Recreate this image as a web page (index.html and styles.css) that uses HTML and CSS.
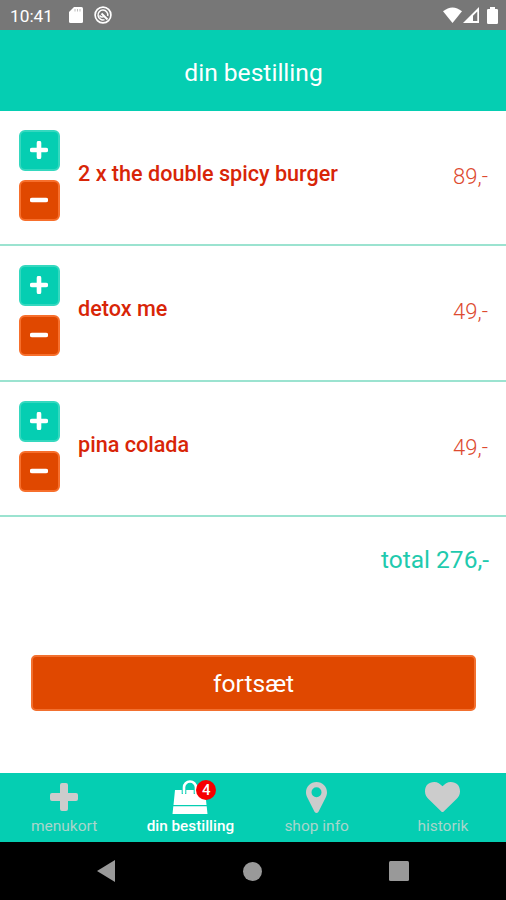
FILE: index.html
```html
<!DOCTYPE html>
<html lang="da">

<head>
    <meta charset="utf-8">
    <title>din bestilling</title>
    <link rel="stylesheet" href="styles.css">
</head>

<body>
    <div class="status-bar">
        <span class="clock">10:41</span>
        <svg class="icon-sd" width="14" height="16" viewBox="0 0 14 16">
            <path fill="#fff" d="M5 0h7.500Q14 0 14 1.500v13Q14 16 12.500 16h-11Q0 16 0 14.500V5z" />
            <path stroke="#aaa" stroke-width=".8" d="M6 2v2.500M8.500 2v2.500M11 2v2.500" />
        </svg>
        <svg class="icon-debug" width="18" height="18" viewBox="0 0 18 18" fill="none" stroke="#fff">
            <circle cx="9" cy="9" r="7.900" stroke-width="1.700" />
            <path stroke-width="1.500" d="M10.500 13.600A4.900 4.900 0 1 1 13.700 10" />
            <path stroke-width="2" d="M7.500 7.500l6 6" />
            <path stroke-width="1.400" d="M5.500 9.500q2 2.500 4.500 1" />
        </svg>
        <div class="status-right">
            <svg width="19" height="16" viewBox="0 0 19 16">
                <path fill="#fff" d="M0 4.300Q9.500-3.500 19 4.300L9.500 16z" />
            </svg>
            <svg width="16" height="16" viewBox="0 0 16 16">
                <path fill="#fff" fill-rule="evenodd" d="M16 0v16H0zM14.300 4.500L10 8.800v5.200h4.300z" />
            </svg>
            <svg class="icon-battery" width="11" height="17" viewBox="0 0 11 17">
                <path fill="#fff" d="M3 0h5v2h1.800Q11 2 11 3.200v12.600Q11 17 9.800 17H1.200Q0 17 0 15.800V3.200Q0 2 1.200 2H3z" />
            </svg>
        </div>
    </div>

    <header class="header">din bestilling</header>

    <main class="content">
        <div class="order-row">
            <div class="quantity">
                <button class="btn-square plus"><svg width="18" height="18" viewBox="0 0 18 18"><path d="M9 2v14M2 9h14" /></svg></button>
                <button class="btn-square minus"><svg width="18" height="18" viewBox="0 0 18 18"><path d="M2 9h14" /></svg></button>
            </div>
            <div class="item-name">2 x the double spicy burger</div>
            <div class="item-price">89,-</div>
        </div>
        <div class="order-row">
            <div class="quantity">
                <button class="btn-square plus"><svg width="18" height="18" viewBox="0 0 18 18"><path d="M9 2v14M2 9h14" /></svg></button>
                <button class="btn-square minus"><svg width="18" height="18" viewBox="0 0 18 18"><path d="M2 9h14" /></svg></button>
            </div>
            <div class="item-name">detox me</div>
            <div class="item-price">49,-</div>
        </div>
        <div class="order-row">
            <div class="quantity">
                <button class="btn-square plus"><svg width="18" height="18" viewBox="0 0 18 18"><path d="M9 2v14M2 9h14" /></svg></button>
                <button class="btn-square minus"><svg width="18" height="18" viewBox="0 0 18 18"><path d="M2 9h14" /></svg></button>
            </div>
            <div class="item-name">pina colada</div>
            <div class="item-price">49,-</div>
        </div>
        <div class="total">total 276,-</div>
        <button class="continue">fortsæt</button>
    </main>

    <nav class="tab-bar">
        <div class="tab">
            <div class="tab-icon">
                <svg width="28" height="28" viewBox="0 0 28 28">
                    <path d="M12 0h4q2 0 2 2v8h8q2 0 2 2v4q0 2-2 2h-8v8q0 2-2 2h-4q-2 0-2-2v-8H2q-2 0-2-2v-4q0-2 2-2h8V2q0-2 2-2z" />
                </svg>
            </div>
            <span>menukort</span>
        </div>
        <div class="tab active">
            <div class="tab-icon">
                <svg width="36" height="34" viewBox="0 0 36 34">
                    <path d="M3 10h30l1.500 15h-33zM1.300 26.200h33.400L35.500 34H.5z" />
                    <path fill="none" stroke="#05ceb2" stroke-width="4.600" d="M12 14V8a6 6 0 0 1 12 0v6" />
                    <path fill="none" stroke="#fff" stroke-width="2.600" stroke-linecap="round" d="M12 13V7.500a6 6 0 0 1 12 0V13" />
                </svg>
                <span class="badge">4</span>
            </div>
            <span>din bestilling</span>
        </div>
        <div class="tab">
            <div class="tab-icon">
                <svg width="21" height="31" viewBox="0 0 21 31">
                    <path fill-rule="evenodd" d="M10.500 0C4.700 0 0 4.500 0 10.300c0 2 .5 3.600 1.300 5.200l7.200 14.300q2 2.400 4 0l7.200-14.300c.8-1.600 1.300-3.200 1.300-5.200C21 4.500 16.300 0 10.500 0zM10.500 5.300a5 5 0 1 1 0 10 5 5 0 0 1 0-10z" />
                </svg>
            </div>
            <span>shop info</span>
        </div>
        <div class="tab">
            <div class="tab-icon">
                <svg width="35" height="30" viewBox="0 0 35 30">
                    <path d="M17.500 30q-.7 0-1.200-.5L3.500 17C1.500 15 0 12.500 0 9.500 0 3.500 3.500 0 9.300 0c3.300 0 6 2 8.200 4.300C19.700 2 22.400 0 25.700 0 31.500 0 35 3.500 35 9.500c0 3-1.500 5.500-3.500 7.500L18.700 29.500q-.5.500-1.200.5z" />
                </svg>
            </div>
            <span>historik</span>
        </div>
    </nav>

    <div class="system-nav">
        <svg width="18" height="22" viewBox="0 0 18 22"><path d="M18 0v22L0 11z" /></svg>
        <svg width="19" height="19" viewBox="0 0 19 19"><circle cx="9.500" cy="9.500" r="9.500" /></svg>
        <svg width="20" height="20" viewBox="0 0 20 20"><rect width="20" height="20" rx="1.500" /></svg>
    </div>
</body>

</html>
```
FILE: styles.css
```css
body {
    margin: 0;
    height: 900px;
    display: flex;
    flex-direction: column;
    overflow: hidden;
    font-family: Roboto, 'Liberation Sans', sans-serif;
    background-color: #fff;
}

svg {
    display: block;
}

button {
    font-family: inherit;
    box-sizing: border-box;
}

.status-bar {
    display: flex;
    align-items: center;
    height: 30px;
    box-sizing: border-box;
    padding: 0 8px 0 10px;
    background-color: #777;
    color: #fff;
}

.clock {
    width: 59px;
    padding-top: 2px;
    font-size: 17.3px;
    line-height: 30px;
}

.icon-debug {
    margin-left: 11px;
}

.status-right {
    display: flex;
    align-items: center;
    margin-left: auto;
}

.status-right svg + svg {
    margin-left: 1px;
}

.status-right .icon-battery {
    margin-left: 8px;
}

.header {
    height: 81px;
    line-height: 86px;
    padding-left: 1px;
    background-color: #05ceb2;
    color: #fff;
    font-size: 24.6px;
    text-align: center;
}

.content {
    flex: 1;
    display: flex;
    flex-direction: column;
}

.order-row {
    display: flex;
    height: 135.4px;
    box-sizing: border-box;
    padding: 19px 18px 0 19px;
    border-bottom: 2px solid #9be3d0;
}

.quantity {
    display: flex;
    flex-direction: column;
    gap: 9px;
    width: 59px;
}

.btn-square {
    width: 41px;
    height: 41px;
    padding: 0 1px 1px 0;
    display: flex;
    align-items: center;
    justify-content: center;
    border-radius: 6px;
}

.btn-square svg {
    fill: none;
    stroke: #fff;
    stroke-width: 4.6;
    stroke-linecap: round;
}

.plus {
    background-color: #05ceb2;
    border: 2px solid #35d8bf;
}

.minus {
    background-color: #e04800;
    border: 2px solid #f76f2c;
}

.item-name {
    flex: 1;
    padding-top: 30px;
    color: #d82507;
    font-size: 21.6px;
    font-weight: 500;
    line-height: 28px;
}

.item-price {
    padding-top: 33px;
    color: #dd4a30;
    font-size: 22px;
    font-weight: 300;
    line-height: 28px;
}

.total {
    margin-top: 27px;
    padding-right: 17px;
    color: #1fcaae;
    font-size: 24.5px;
    line-height: 32px;
    text-align: right;
}

.continue {
    height: 56px;
    margin: 79px 30px 0 31px;
    padding: 1px 0 0;
    background-color: #e04800;
    border: 2px solid #f2702f;
    border-radius: 5px;
    color: #fff;
    font-size: 24.6px;
}

.tab-bar {
    display: grid;
    grid-template-columns: repeat(4, 1fr);
    height: 69px;
    padding-left: 1px;
    background-color: #05ceb2;
}

.tab {
    display: flex;
    flex-direction: column;
    align-items: center;
    color: #a9d5cc;
    font-size: 15.5px;
    line-height: 21px;
}

.tab-icon {
    position: relative;
    display: flex;
    align-items: center;
    height: 38px;
    padding-top: 5px;
    fill: #ccc;
}

.tab-icon + span {
    white-space: nowrap;
}

.tab.active {
    color: #fff;
    font-weight: 500;
}

.active .tab-icon + span {
    font-size: 15.3px;
}

.active .tab-icon {
    fill: #fff;
}

.badge {
    position: absolute;
    top: 7px;
    right: -8px;
    width: 20px;
    height: 20px;
    border-radius: 50%;
    background-color: #f60000;
    color: #fff;
    font-size: 15px;
    font-weight: 500;
    line-height: 21px;
    text-align: center;
}

.system-nav {
    display: flex;
    align-items: center;
    justify-content: space-between;
    height: 58px;
    box-sizing: border-box;
    padding: 0 97px;
    background-color: #000;
    fill: #999;
}
```
